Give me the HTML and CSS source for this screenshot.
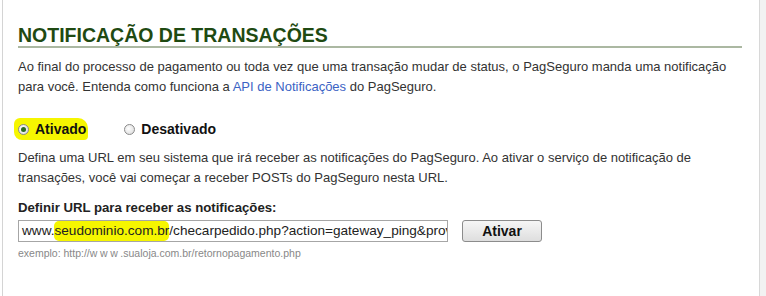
FILE: index.html
```html
<!DOCTYPE html>
<html lang="pt-BR">
<head>
<meta charset="utf-8">
<link rel="stylesheet" href="styles.css">
</head>
<body>
<div class="page">
  <div class="content">
    <h2 class="title">NOTIFICAÇÃO DE TRANSAÇÕES</h2>
    <p class="text first">Ao final do processo de pagamento ou toda vez que uma transação mudar de status, o PagSeguro manda uma notificação para você. Entenda como funciona a <a href="#" class="link">API de Notificações</a> do PagSeguro.</p>
    <div class="radios">
      <label class="radio hl"><span class="dot on"></span>Ativado</label>
      <label class="radio"><span class="dot"></span>Desativado</label>
    </div>
    <p class="text second">Defina uma URL em seu sistema que irá receber as notificações do PagSeguro. Ao ativar o serviço de notificação de transações, você vai começar a receber POSTs do PagSeguro nesta URL.</p>
    <div class="label">Definir URL para receber as notificações:</div>
    <div class="row">
      <div class="input">www.<span class="mark">seudominio.com.br</span>/checarpedido.php?action=gateway_ping&amp;provider=pagseguro</div>
      <button class="btn">Ativar</button>
    </div>
    <div class="example">exemplo: http://<span class="www">www</span>.sualoja.com.br/retornopagamento.php</div>
  </div>
  <div class="scroll"></div>
</div>
</body>
</html>
```
FILE: styles.css
```css
html, body { margin: 0; padding: 0; background: #fff; }
body { font-family: "Liberation Sans", Arial, sans-serif; color: #333; }
.page { display: flex; height: 296px; overflow: hidden; }
.content {
  flex: 0 0 756px;
  border-left: 1px solid #d4d4d4;
  margin-left: 2px;
  padding: 24px 0 0 15px;
  box-sizing: border-box;
}
.scroll { flex: 1; border-left: 1px solid #d8d8d8; background: #f2f2f2; margin-left: 1px; }
.title {
  margin: 0; width: 724px;
  font-size: 19.5px; font-weight: bold; color: #1f4a12;
  line-height: 22px; padding-bottom: 0;
  border-bottom: 2px solid #abb8a2;
}
.text { margin: 0; font-size: 13px; line-height: 20px; width: 724px; color: #333; }
.text.first { margin-top: 9px; }
.text.second { margin-top: 8px; }
.link { color: #3b63c4; text-decoration: none; }
.radios { display: flex; margin-top: 21px; height: 22px; align-items: center; }
.radio { display: inline-flex; align-items: center; font-size: 14px; font-weight: bold; color: #111; }
.radio.hl { background: #f6f600; border-radius: 6px 10px 4px 8px; padding: 3px 2px 3px 4px; margin-left: -4px; margin-right: 36px; }
.dot {
  width: 11px; height: 11px; border-radius: 50%; box-sizing: border-box;
  border: 1px solid #8a8a8a; background: radial-gradient(circle at 40% 40%, #fff, #d6d6d6);
  margin-right: 6px; position: relative;
}
.dot.on::after {
  content: ""; position: absolute; left: 2px; top: 2px; width: 5px; height: 5px;
  border-radius: 50%; background: #2b6a1e;
}
.label { margin-top: 12px; font-size: 13.2px; font-weight: bold; color: #222; line-height: 16px; }
.row { display: flex; align-items: center; margin-top: 4px; gap: 14px; }
.input {
  width: 430px; height: 22px; box-sizing: border-box; border: 1px solid #a6a6a6;
  font-size: 13.6px; line-height: 20px; padding: 0 3px; color: #222;
  white-space: nowrap; overflow: hidden;
}
.mark { background: #f6f600; border-radius: 5px; padding: 2px 0 3px; }
.btn {
  width: 80px; height: 22px; font-family: inherit; font-size: 14px; font-weight: bold; color: #111;
  border: 1px solid #8c8c8c; border-radius: 3px; background: linear-gradient(#f6f6f6, #dedede);
  padding: 0;
}
.example { margin-top: 5px; font-size: 10.5px; line-height: 12px; color: #888; }
.www { letter-spacing: 2.6px; }
```
